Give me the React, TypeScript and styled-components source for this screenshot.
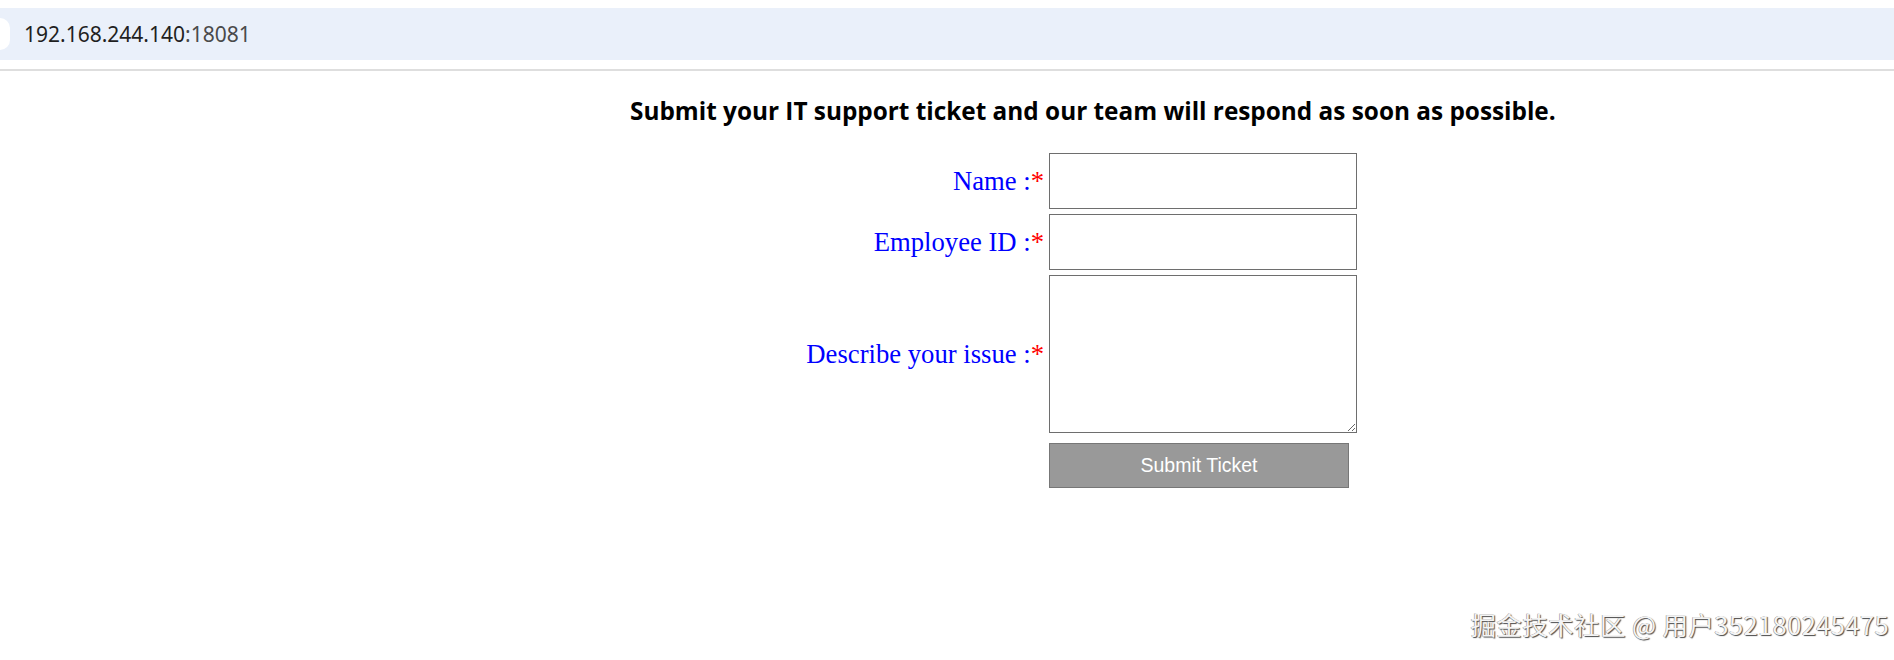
import * as React from 'react';
import styled, { createGlobalStyle } from 'styled-components';

const GlobalStyle = createGlobalStyle`
    html, body {
        margin: 0;
        padding: 0;
        background: #fff;
    }

    body {
        width: 1894px;
        height: 660px;
        overflow: hidden;
        position: relative;
        font-family: 'Liberation Serif', 'Times New Roman', serif;
    }
`;

const BrowserTop = styled.div`
    padding-top: 8px;
`;

const AddressBar = styled.div`
    height: 52px;
    background: #eaf0fa;
    display: flex;
    align-items: center;
`;

const SiteChip = styled.span`
    width: 10px;
    height: 32px;
    background: #fff;
    border-radius: 0 16px 16px 0;
`;

const Url = styled.div`
    margin-left: 14px;
    font-family: 'Noto Sans', 'Liberation Sans', sans-serif;
    font-size: 21px;
    color: #1f1f1f;
`;

const Port = styled.span`
    color: #4a4a4a;
`;

const Divider = styled.div`
    margin-top: 9px;
    height: 2px;
    background: #dedede;
`;

const Content = styled.div`
    margin-left: 630px;
    width: 924px;
`;

const Title = styled.h1`
    margin: 22px 0 24px;
    font-family: 'Open Sans', 'Noto Sans', sans-serif;
    font-weight: 700;
    font-size: 24.35px;
    line-height: 36px;
    color: #000;
    text-align: center;
    white-space: nowrap;
`;

const Form = styled.form`
    display: grid;
    grid-template-columns: 414px 308px;
    column-gap: 5px;
    row-gap: 5px;
`;

const Label = styled.label`
    display: flex;
    align-items: center;
    justify-content: flex-end;
    font-family: 'Liberation Serif', 'Times New Roman', serif;
    font-size: 26.67px;
    color: #0000ff;
    white-space: pre;
`;

const Required = styled.span`
    color: #ff0000;
`;

const TextInput = styled.input`
    box-sizing: border-box;
    width: 308px;
    height: 56px;
    margin: 0;
    border: 1px solid #6e6e6e;
    background: #fff;
    outline: none;
`;

const TextArea = styled.textarea`
    box-sizing: border-box;
    width: 308px;
    height: 158px;
    margin: 0;
    border: 1px solid #6e6e6e;
    background: #fff;
    outline: none;
    resize: both;
`;

const ButtonCell = styled.div`
    grid-column: 2;
    padding-top: 5px;
`;

const SubmitButton = styled.button`
    box-sizing: border-box;
    width: 300px;
    height: 45px;
    margin: 0;
    padding: 0;
    border: 1px solid #777;
    background: #999;
    color: #fff;
    font-family: 'Liberation Sans', Arial, sans-serif;
    font-size: 19.5px;
    cursor: pointer;
`;

const Watermark = styled.div`
    position: absolute;
    right: 5px;
    bottom: 21px;
    font-family: 'Noto Sans CJK SC', 'Noto Sans', sans-serif;
    font-size: 25.5px;
    line-height: 30px;
    letter-spacing: 0.4px;
    color: #f4f4f4;
    text-shadow: 1px 1px 1px #4a4a4a, -0.5px -0.5px 0.5px #888;
`;

export default function App() {
    return (
        <>
            <GlobalStyle />
            <BrowserTop>
                <AddressBar>
                    <SiteChip />
                    <Url>192.168.244.140<Port>:18081</Port></Url>
                </AddressBar>
                <Divider />
            </BrowserTop>
            <Content>
                <Title>Submit your IT support ticket and our team will respond as soon as possible.</Title>
                <Form onSubmit={e => e.preventDefault()}>
                    <Label htmlFor="name">Name :<Required>*</Required></Label>
                    <TextInput id="name" type="text" />
                    <Label htmlFor="employee">Employee ID :<Required>*</Required></Label>
                    <TextInput id="employee" type="text" />
                    <Label htmlFor="issue">Describe your issue :<Required>*</Required></Label>
                    <TextArea id="issue" />
                    <ButtonCell>
                        <SubmitButton type="submit">Submit Ticket</SubmitButton>
                    </ButtonCell>
                </Form>
            </Content>
            <Watermark>掘金技术社区 @ 用户352180245475</Watermark>
        </>
    );
}
